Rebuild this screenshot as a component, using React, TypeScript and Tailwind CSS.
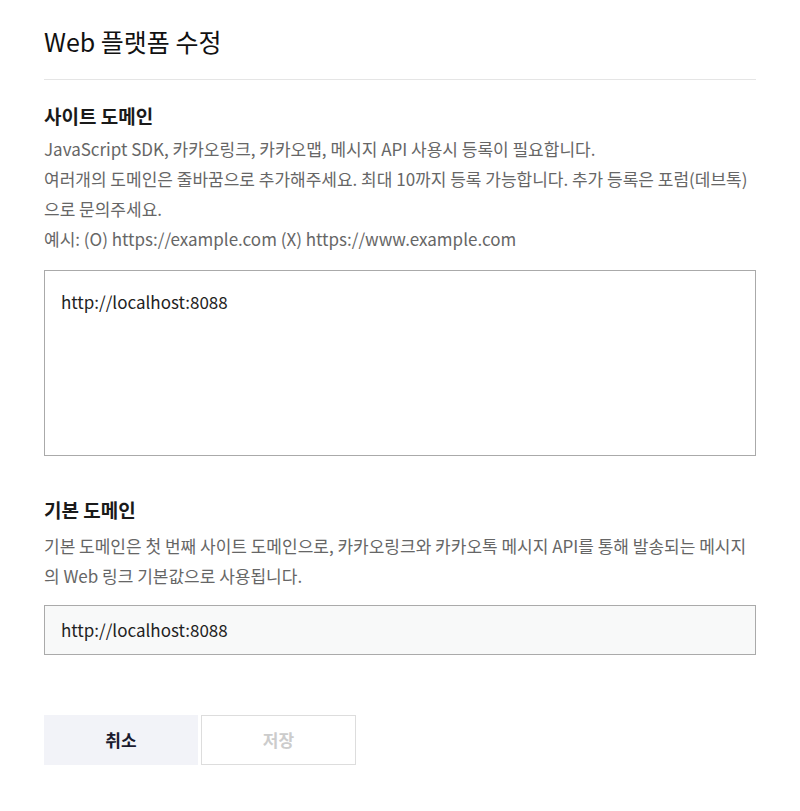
import React from "react";

export default function App() {
  return (
    <div
      className="w-[800px] h-[811px] bg-white"
      style={{ fontFamily: '"Noto Sans CJK KR", "Noto Sans", sans-serif' }}
    >
      <div className="px-[44px] pt-[23px]">
        <h1 className="text-[25px] leading-[37px] text-[#111] font-normal pb-[19px] border-b border-[#e5e5e5]">
          Web 플랫폼 수정
        </h1>

        <section className="pt-[22px]">
          <h2 className="text-[19px] leading-[28px] font-bold text-[#1a1a1a]">사이트 도메인</h2>
          <div className="mt-[4px] text-[17px] leading-[30px] text-[#666]">
            <p>JavaScript SDK, 카카오링크, 카카오맵, 메시지 API 사용시 등록이 필요합니다.</p>
            <p>
              여러개의 도메인은 줄바꿈으로 추가해주세요. 최대 10까지 등록 가능합니다. 추가 등록은 포럼(데브톡)
              으로 문의주세요.
            </p>
            <p>예시: (O) https://example.com (X) https://www.example.com</p>
          </div>
          <textarea
            className="mt-[16px] block w-full h-[186px] border border-[#aaa] px-[16px] py-[16px] text-[17px] leading-[30px] text-[#222] resize-none outline-none"
            defaultValue="http://localhost:8088"
          />
        </section>

        <section className="pt-[40px]">
          <h2 className="text-[19px] leading-[28px] font-bold text-[#1a1a1a]">기본 도메인</h2>
          <p className="mt-[7px] text-[17px] leading-[30px] text-[#666]">
            기본 도메인은 첫 번째 사이트 도메인으로, 카카오링크와 카카오톡 메시지 API를 통해 발송되는 메시지
            의 Web 링크 기본값으로 사용됩니다.
          </p>
          <div className="mt-[14px] h-[50px] border border-[#aaa] bg-[#f8f9f9] px-[16px] flex items-center text-[17px] text-[#222]">
            http://localhost:8088
          </div>
        </section>

        <div className="mt-[60px] flex gap-[3px]">
          <button className="w-[154px] h-[50px] bg-[#f2f3f8] text-[17px] text-[#1a1a2e] font-bold">
            취소
          </button>
          <button className="w-[155px] h-[50px] bg-white border border-[#ddd] text-[17px] text-[#ccc] font-bold">
            저장
          </button>
        </div>
      </div>
    </div>
  );
}
